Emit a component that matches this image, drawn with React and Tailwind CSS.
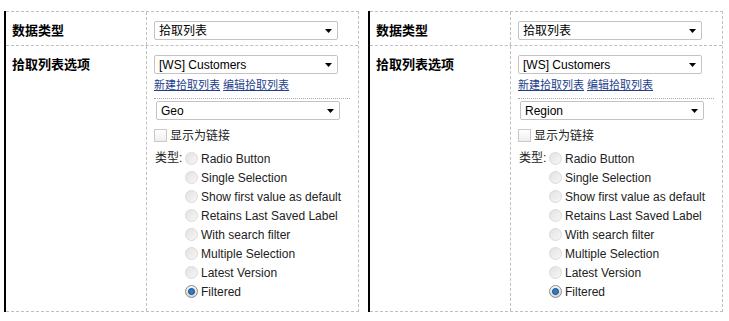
import React from 'react';

const font = "font-['Liberation_Sans','Noto_Sans_CJK_SC',sans-serif]";

const Select = ({ value, className = '' }) => (
    <div className={`w-[184px] h-[19px] border border-[#c4c4c4] rounded-[2px] bg-white flex items-center justify-between pl-[4px] pr-[5px] text-[12px] text-black leading-none ${className}`}>
        <span>{value}</span>
        <svg width="7" height="4" viewBox="0 0 7 4">
            <path d="M0 0h7L3.5 4z" fill="#000" />
        </svg>
    </div>
);

const Radio = ({ checked }) => (
    checked ? (
        <span className="w-[13px] h-[13px] rounded-full border border-[#8c8c8c] bg-gradient-to-b from-[#f4f4f4] to-[#d6d6d6] flex items-center justify-center shrink-0">
            <span className="w-[7px] h-[7px] rounded-full bg-[#2d7cc8] border border-[#174b82]" />
        </span>
    ) : (
        <span className="w-[13px] h-[13px] rounded-full border border-[#dadada] bg-gradient-to-br from-[#e2e2e2] to-[#f7f7f7] shrink-0" />
    )
);

const types = [
    'Radio Button',
    'Single Selection',
    'Show first value as default',
    'Retains Last Saved Label',
    'With search filter',
    'Multiple Selection',
    'Latest Version',
    'Filtered'
];

const Panel = ({ field }) => (
    <div className="w-[355px] border-l-2 border-solid border-black">
        <div className="border-t border-r border-b border-dashed border-[#c0c0c0]">
            <div className="flex h-[34px] border-b border-dashed border-[#c0c0c0]">
                <div className="w-[141px] border-r border-dashed border-[#c0c0c0] pl-[6px] pt-[9px] text-[13px] font-bold leading-[19px] text-black">
                    数据类型
                </div>
                <div className="w-[211px] pl-[7px] pt-[9px]">
                    <Select value="拾取列表" />
                </div>
            </div>
            <div className="flex">
                <div className="w-[141px] border-r border-dashed border-[#c0c0c0] pl-[6px] pt-[9px] text-[13px] font-bold leading-[19px] text-black">
                    拾取列表选项
                </div>
                <div className="w-[211px] pl-[7px] pr-[8px] pt-[9px] pb-[10px]">
                    <Select value="[WS] Customers" />
                    <div className="mt-[3px] h-[16px] leading-[16px] text-[11px] text-[#233f8c]">
                        <span className="underline">新建拾取列表</span>{' '}
                        <span className="underline">编辑拾取列表</span>
                    </div>
                    <div className="mt-[5px] border-t border-dotted border-[#a8a8a8]">
                        <Select value={field} className="mt-[2px] ml-[2px]" />
                        <div className="mt-[6px] h-[19px] flex items-center text-[12px] text-[#222]">
                            <span className="w-[13px] h-[13px] border border-[#c9c9c9] bg-gradient-to-b from-white to-[#eeeeee] shrink-0" />
                            <span className="ml-[3px]">显示为链接</span>
                        </div>
                        <div className="mt-[4px] flex text-[12px] text-[#222]">
                            <div className="w-[31px] pl-[1px] h-[19px] leading-[19px]">类型:</div>
                            <div className="flex flex-col">
                                {types.map((t, i) => (
                                    <div key={t} className="h-[19px] flex items-center">
                                        <Radio checked={i === types.length - 1} />
                                        <span className="ml-[3px] whitespace-nowrap">{t}</span>
                                    </div>
                                ))}
                            </div>
                        </div>
                    </div>
                </div>
            </div>
        </div>
    </div>
);

export default function App() {
    return (
        <div className={`w-[729px] h-[321px] bg-white pl-[4px] pt-[11px] flex items-start gap-[9px] ${font}`}>
            <Panel field="Geo" />
            <Panel field="Region" />
        </div>
    );
}
